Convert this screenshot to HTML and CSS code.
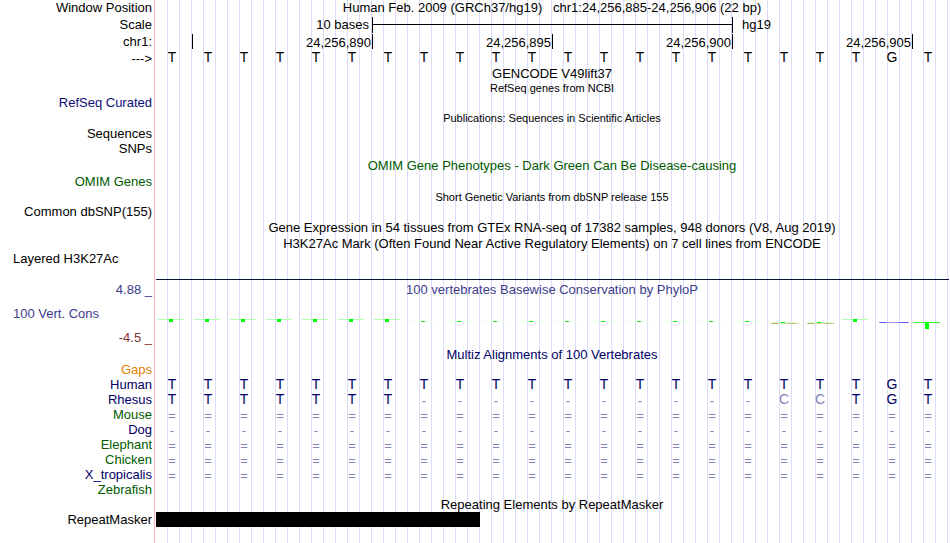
FILE: index.html
```html
<!DOCTYPE html>
<html lang="en">
<head>
<meta charset="utf-8">
<title>Human chr1:24,256,885-24,256,906</title>
<link rel="stylesheet" href="styles.css">
</head>
<body>
<main class="browser">
  <div class="row row-tall">
    <div class="label">Window Position</div>
    <div class="caption">Human Feb. 2009 (GRCh37/hg19)&nbsp;&nbsp; chr1:24,256,885-24,256,906 (22 bp)</div>
  </div>
  <div class="row row-taller">
    <div class="label">Scale</div>
    <div class="scale"><span class="scale-size">10 bases</span><span class="scale-bar"></span><span class="scale-db">hg19</span></div>
  </div>
  <div class="row row-tall">
    <div class="label">chr1:</div>
    <div class="ruler"><span></span><span>24,256,890</span><span>24,256,895</span><span>24,256,900</span><span>24,256,905</span></div>
  </div>
  <table class="bases reference">
    <tbody>
      <tr data-bases="TTTTTTTTTTTTTTTTTTTTGT"><th scope="row">---&gt;</th></tr>
    </tbody>
  </table>

  <div class="row"><div class="caption">GENCODE V49lift37</div></div>
  <div class="row row-short"><div class="caption small">RefSeq genes from NCBI</div></div>
  <div class="row"><div class="label blue">RefSeq Curated</div></div>
  <div class="row row-tall"><div class="caption small">Publications: Sequences in Scientific Articles</div></div>
  <div class="row"><div class="label">Sequences</div></div>
  <div class="row row-tall"><div class="label">SNPs</div></div>
  <div class="row row-taller"><div class="caption green">OMIM Gene Phenotypes - Dark Green Can Be Disease-causing</div></div>
  <div class="row row-short"><div class="label green">OMIM Genes</div></div>
  <div class="row row-tall"><div class="caption small">Short Genetic Variants from dbSNP release 155</div></div>
  <div class="row row-short"><div class="label">Common dbSNP(155)</div></div>
  <div class="row row-taller"><div class="caption">Gene Expression in 54 tissues from GTEx RNA-seq of 17382 samples, 948 donors (V8, Aug 2019)</div></div>
  <div class="row row-short"><div class="caption">H3K27Ac Mark (Often Found Near Active Regulatory Elements) on 7 cell lines from ENCODE</div></div>
  <div class="row row-layered">
    <div class="label start">Layered H3K27Ac</div>
    <div class="baseline"></div>
  </div>

  <section class="row conservation">
    <div class="axis">
      <div class="label indigo">4.88 _</div>
      <div class="label indigo start">100 Vert. Cons</div>
      <div class="label maroon">-4.5 _</div>
    </div>
    <div class="plot">
      <div class="caption indigo">100 vertebrates Basewise Conservation by PhyloP</div>
      <div class="scores" data-scores="hhhhhhhlllllllllloohbn"></div>
    </div>
  </section>

  <div class="row"><div class="caption navy">Multiz Alignments of 100 Vertebrates</div></div>
  <table class="bases alignment">
    <tbody>
      <tr data-bases=""><th scope="row" class="orange">Gaps</th></tr>
      <tr data-bases="TTTTTTTTTTTTTTTTTTTTGT"><th scope="row" class="navy">Human</th></tr>
      <tr data-bases="TTTTTTT----------CCTGT"><th scope="row" class="navy">Rhesus</th></tr>
      <tr data-bases="======================"><th scope="row" class="green">Mouse</th></tr>
      <tr data-bases="----------------------"><th scope="row" class="navy">Dog</th></tr>
      <tr data-bases="======================"><th scope="row" class="green">Elephant</th></tr>
      <tr data-bases="======================"><th scope="row" class="green">Chicken</th></tr>
      <tr data-bases="======================"><th scope="row" class="navy">X_tropicalis</th></tr>
      <tr data-bases=""><th scope="row" class="green">Zebrafish</th></tr>
    </tbody>
  </table>
  <div class="row"><div class="caption">Repeating Elements by RepeatMasker</div></div>
  <div class="row">
    <div class="label">RepeatMasker</div>
    <div class="repeats"><span class="repeat"></span></div>
  </div>
</main>
<script src="script.js"></script>
</body>
</html>
```
FILE: styles.css
```css
* {
  box-sizing: border-box;
}

body {
  margin: 0;
  background: #fff;
  color: #000;
  font: 13px/15px "Liberation Sans", Arial, sans-serif;
}

/* Guide lines every 12px, with the red divider after the labels */
.browser {
  min-height: 100vh;
  padding-bottom: 16px;
  background:
    linear-gradient(#ffb4b4, #ffb4b4) 154px 0 / 1px 100% no-repeat,
    repeating-linear-gradient(to right, #dcdcf8 0 1px, transparent 1px 12px) 167px 0 no-repeat;
}

.row {
  display: grid;
  grid-template-columns: 154px 1fr;
}

.row-short {
  line-height: 14px;
}

.row-tall {
  line-height: 16px;
}

.row-taller {
  line-height: 18px;
}

.label {
  grid-column: 1;
  padding-right: 2px;
  text-align: right;
  white-space: nowrap;
}

.label.start {
  padding-left: 13px;
  text-align: left;
}

.caption {
  grid-column: 2;
  text-align: center;
  white-space: nowrap;
}

.small {
  font-size: 11px;
}

.blue { color: #0c0c78; }
.navy { color: #000064; }
.green { color: #005a00; }
.indigo { color: #3c3c8c; }
.maroon { color: #823232; }
.orange { color: #e08000; }

.scale,
.ruler {
  display: grid;
  padding: 0 1px 0 3px;
}

.scale {
  grid-template-columns: 6fr 10fr 6fr;
  align-items: center;
  line-height: 16px;
}

.scale span {
  height: 16px;
}

.scale-size {
  padding-right: 3px;
  border-right: 1px solid #000;
  text-align: right;
}

.scale-bar {
  border-right: 1px solid #000;
  background: linear-gradient(#000, #000) 0 7px / 100% 1px no-repeat;
}

.scale-db {
  padding-left: 9px;
}

.ruler {
  grid-template-columns: 1fr 5fr 5fr 5fr 5fr 1fr;
}

.ruler span {
  height: 15px;
  padding-right: 1px;
  border-right: 1px solid #000;
  line-height: 18px;
  text-align: right;
}

.bases {
  width: calc(100% - 4px);
  table-layout: fixed;
  border-collapse: collapse;
}

.bases th {
  width: 154px;
  height: 15px;
  padding: 0 2px 0 0;
  font-weight: normal;
  text-align: right;
}

.bases td {
  padding: 0;
  font-size: 14px;
  text-align: center;
}

.reference th {
  height: 16px;
}

.reference td {
  padding-bottom: 2px;
  line-height: 14px;
}

.alignment td {
  color: #000064;
}

.alignment .unmatched {
  color: #8282b4;
}

.alignment .symbol {
  padding-top: 2px;
  color: #8282b4;
  font-size: 13px;
  line-height: 13px;
}

.row-layered {
  min-height: 29px;
}

.baseline {
  margin: 0 1px 0 2px;
  border-bottom: 1px solid #06143c;
}

.axis {
  display: flex;
  flex-direction: column;
  gap: 9px;
  padding: 2px 0;
}

.plot {
  display: flex;
  flex-direction: column;
  gap: 20px;
  padding-top: 2px;
}

.scores {
  display: grid;
  grid-template-columns: repeat(22, 1fr);
  padding-right: 4px;
}

.scores svg {
  display: block;
  width: 36px;
  height: 14px;
}

.repeats {
  padding: 0 2px;
}

.repeat {
  display: block;
  width: calc(100% * 9 / 22);
  height: 15px;
  background: #000;
}
```
FILE: script.js
```js
// One table cell per base
document.querySelectorAll("tr[data-bases]").forEach(function (row) {
  var bases = row.dataset.bases.padEnd(22, " ");
  for (var i = 0; i < 22; i++) {
    var cell = row.insertCell();
    cell.textContent = bases[i].trim();
    if ("=-".includes(bases[i])) cell.className = "symbol";
    if (bases[i] === "C") cell.className = "unmatched";
  }
});

// Score marks: [x, y, width, height, colour]
var marks = {
  h: [[4, 2, 26, 1, "#b4ffb4"], [15, 2, 4, 3, "#00ff00"]],
  l: [[4, 4, 26, 1, "#e6ffe6"], [15, 4, 4, 1, "#1edc1e"]],
  o: [[5, 5, 26, 1, "#d2ffd2"], [5, 6, 28, 1, "#d2dcaa"], [6, 6, 6, 1, "#b4b45a"], [22, 6, 7, 1, "#bebe6e"], [15, 5, 4, 1, "#00ff00"]],
  b: [[5, 5, 30, 1, "#9696ff"], [6, 5, 6, 1, "#5a5aff"], [26, 5, 8, 1, "#5a5aff"]],
  n: [[4, 5, 26, 1, "#32ff32"], [15, 5, 4, 7, "#00ff00"]]
};

document.querySelectorAll("[data-scores]").forEach(function (track) {
  track.innerHTML = Array.from(track.dataset.scores, function (kind) {
    return '<svg viewBox="0 0 36 14" shape-rendering="crispEdges" aria-hidden="true">' +
      marks[kind].map(function (m) {
        return '<rect x="' + m[0] + '" y="' + m[1] + '" width="' + m[2] + '" height="' + m[3] + '" fill="' + m[4] + '"/>';
      }).join("") + "</svg>";
  }).join("");
});
```
